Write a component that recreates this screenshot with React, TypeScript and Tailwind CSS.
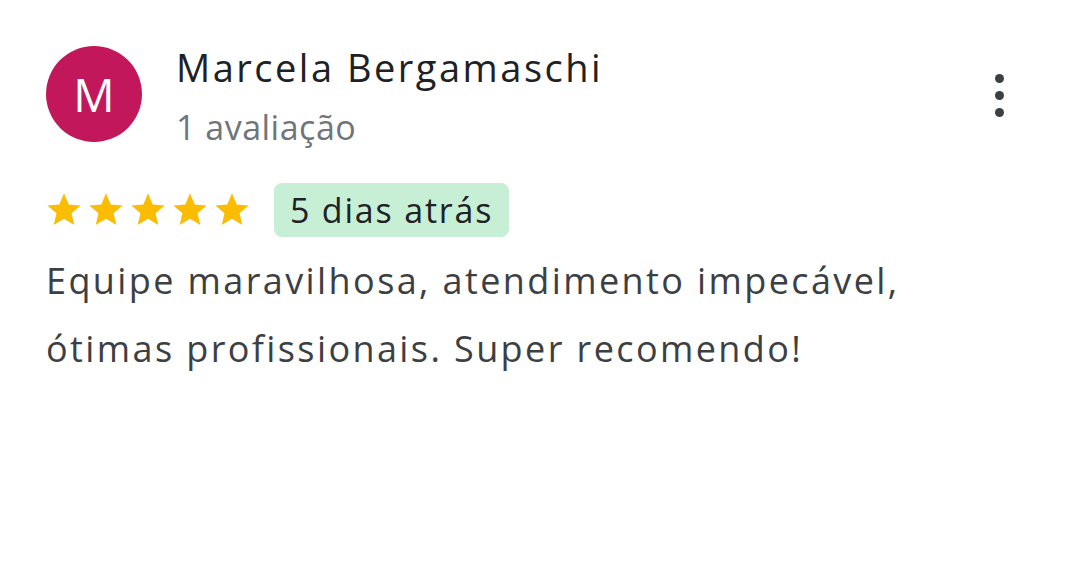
function Star() {
  return (
    <svg viewBox="0 0 24 24" className="w-[40px] h-[40px]" fill="#fbbc04">
      <path d="M12 17.27 18.18 21l-1.64-7.03L22 9.24l-7.19-.61L12 2 9.19 8.63 2 9.24l5.46 4.73L5.82 21z" />
    </svg>
  );
}

export default function App() {
  return (
    <div className="w-[1080px] h-[566px] bg-white font-['Open_Sans',sans-serif] overflow-hidden">
      <div className="pl-[46px] pr-[40px] pt-[46px]">
        {/* header */}
        <div className="flex items-start">
          <div className="w-[96px] h-[96px] rounded-full bg-[#c2185b] flex items-center justify-center shrink-0">
            <span className="text-white text-[46px] leading-none">M</span>
          </div>
          <div className="ml-[34px] flex-1">
            <div className="text-[38px] leading-[46px] font-medium tracking-[2.5px] text-[#202124] mt-[-2px]">Marcela Bergamaschi</div>
            <div className="text-[34px] leading-[40px] tracking-[0.5px] text-[#70757a] mt-[17px]">1 avaliação</div>
          </div>
          <div className="mt-[28px] mr-[36px] flex flex-col gap-[8px]">
            <span className="w-[9px] h-[9px] rounded-full bg-[#3c4043]" />
            <span className="w-[9px] h-[9px] rounded-full bg-[#3c4043]" />
            <span className="w-[9px] h-[9px] rounded-full bg-[#3c4043]" />
          </div>
        </div>

        {/* rating */}
        <div className="flex items-center mt-[36px]">
          <div className="flex items-center gap-[2px] -ml-[2px]">
            <Star />
            <Star />
            <Star />
            <Star />
            <Star />
          </div>
          <div className="ml-[22px] bg-[#c6efd6] rounded-[8px] px-[16px] h-[54px] flex items-center text-[34px] tracking-[1.8px] text-[#202124]">
            5 dias atrás
          </div>
        </div>

        {/* body */}
        <p className="mt-[10px] text-[36px] leading-[68px] tracking-[2.4px] text-[#3c4043]">
          Equipe maravilhosa, atendimento impecável,
          <br />
          ótimas profissionais. Super recomendo!
        </p>
      </div>
    </div>
  );
}
